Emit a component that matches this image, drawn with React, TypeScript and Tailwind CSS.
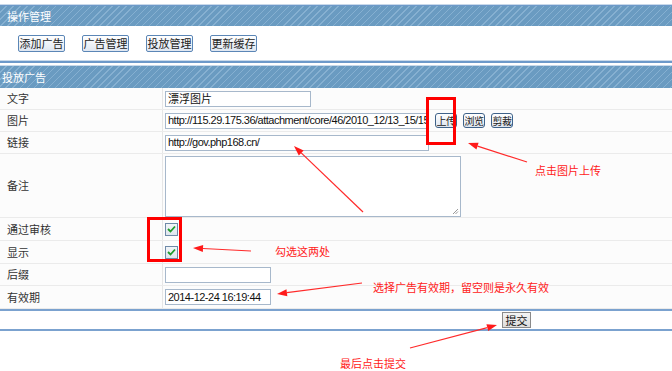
import React from "react";

const band =
  "bg-[repeating-linear-gradient(135deg,#6a9bc1_0px,#6a9bc1_4px,#86b0d1_4px,#86b0d1_5px)]";

function Arrow({ x1, y1, x2, y2 }: { x1: number; y1: number; x2: number; y2: number }) {
  const dx = x2 - x1;
  const dy = y2 - y1;
  const len = Math.sqrt(dx * dx + dy * dy);
  const ux = dx / len;
  const uy = dy / len;
  const L = 10;
  const W = 3.5;
  const bx = x2 - ux * L;
  const by = y2 - uy * L;
  const pts = `${x2},${y2} ${bx - uy * W},${by + ux * W} ${bx + uy * W},${by - ux * W}`;
  return (
    <g>
      <line x1={x1} y1={y1} x2={bx} y2={by} stroke="#ff2a2a" strokeWidth={1.2} />
      <polygon points={pts} fill="#ff1a1a" />
    </g>
  );
}

function Btn({ children }: { children: React.ReactNode }) {
  return (
    <div className="w-[47px] h-[17px] border border-[#5b86b6] rounded-[2px] bg-[linear-gradient(#ffffff,#dfe7f1)] flex items-center justify-center text-[11px] text-[#222] leading-none whitespace-nowrap">
      {children}
    </div>
  );
}

function SmallBtn({ children }: { children: React.ReactNode }) {
  return (
    <div className="w-[22px] h-[15px] border border-[#3f6289] rounded-[3px] bg-[linear-gradient(#ffffff,#dde5ef)] flex items-center justify-center text-[10px] tracking-[-0.5px] text-[#222] leading-none whitespace-nowrap overflow-hidden">
      {children}
    </div>
  );
}

function Check() {
  return (
    <div className="w-[13px] h-[13px] border border-[#6f8aa8] bg-[linear-gradient(#f2f5f8,#dfe6ee)] flex items-center justify-center">
      <svg width="9" height="8" viewBox="0 0 9 8">
        <path d="M1 4 L3.5 6.5 L8 1.5" fill="none" stroke="#1f9b2a" strokeWidth="1.8" />
      </svg>
    </div>
  );
}

function Row({
  label,
  h,
  children,
  top,
}: {
  label: string;
  h: string;
  children?: React.ReactNode;
  top?: boolean;
}) {
  return (
    <div className={`flex ${h} border-b border-[#ebebeb] bg-[#fcfcfc]`}>
      <div className="w-[163px] border-r border-[#e6e6e6] pl-[7px] flex items-center text-[11px] text-[#333]">
        {label}
      </div>
      <div className={`flex-1 pl-[2px] flex ${top ? "items-start pt-[2px]" : "items-center"} gap-[6px]`}>
        {children}
      </div>
    </div>
  );
}

const inputCls =
  "h-[16px] border border-[#a7b8cb] bg-white flex items-center pl-[2px] overflow-hidden whitespace-nowrap text-[#111]";
const latin = "font-['Liberation_Sans',sans-serif] text-[11px] tracking-[-0.5px]";

export default function App() {
  return (
    <div className="relative w-[672px] h-[371px] overflow-hidden bg-white font-['Noto_Sans_CJK_SC','Noto_Sans',sans-serif]">
      <div className="h-[4px]" />
      <div className="border-t border-[#c8d9ea]" />
      <div className={`h-[21px] border-t border-[#6d99c9] ${band} flex items-center pl-[7px] text-[11px] text-white`}>
        操作管理
      </div>
      <div className="h-[34px] flex items-center gap-[17px] pl-[18px]">
        <Btn>添加广告</Btn>
        <Btn>广告管理</Btn>
        <Btn>投放管理</Btn>
        <Btn>更新缓存</Btn>
      </div>
      <div className="border-t border-[#c8d9ea]" />
      <div className="border-t-2 border-[#6d99c9]" />
      <div className="h-[2px]" />
      <div className="border-t border-[#c8d9ea]" />
      <div className={`h-[22px] ${band} flex items-center pl-[2px] text-[11px] text-white`}>投放广告</div>

      <Row label="文字" h="h-[22px]">
        <div className={`${inputCls} w-[146px] text-[11px]`}>漂浮图片</div>
      </Row>
      <Row label="图片" h="h-[22px]">
        <div className={`${inputCls} w-[264px] ${latin}`}>
          http://115.29.175.36/attachment/core/46/2010_12/13_15/15
        </div>
        <SmallBtn>上传</SmallBtn>
        <SmallBtn>浏览</SmallBtn>
        <SmallBtn>剪裁</SmallBtn>
      </Row>
      <Row label="链接" h="h-[22px]">
        <div className={`${inputCls} w-[264px] ${latin}`}>http://gov.php168.cn/</div>
      </Row>
      <Row label="备注" h="h-[64px]" top>
        <div className="relative w-[296px] h-[61px] border border-[#a7b8cb] bg-white">
          <svg className="absolute right-[1px] bottom-[1px]" width="7" height="7" viewBox="0 0 7 7">
            <path d="M6 1 L1 6 M6 3.5 L3.5 6" stroke="#9a9a9a" strokeWidth="1" />
          </svg>
        </div>
      </Row>
      <Row label="通过审核" h="h-[23px]">
        <Check />
      </Row>
      <Row label="显示" h="h-[23px]">
        <Check />
      </Row>
      <Row label="后缀" h="h-[22px]">
        <div className={`${inputCls} w-[106px]`} />
      </Row>
      <Row label="有效期" h="h-[23px]">
        <div className={`${inputCls} w-[106px] ${latin}`}>2014-12-24 16:19:44</div>
      </Row>
      <div className="border-t-2 border-[#7ba2cf]" />
      <div className="h-[18px] flex items-center pl-[502px]">
        <div className="w-[29px] h-[16px] border border-[#8a8a8a] bg-[linear-gradient(#f4f4f4,#dcdcdc)] flex items-center justify-center text-[11px] text-[#111] leading-none">
          提交
        </div>
      </div>
      <div className="border-t-2 border-[#7ba2cf]" />

      {/* annotations */}
      <div className="absolute left-[426px] top-[97px] w-[30px] h-[48px] border-[3px] border-[#ff0000]" />
      <div className="absolute left-[147px] top-[217px] w-[35px] h-[45px] border-[3px] border-[#ff0000]" />
      <svg className="absolute left-0 top-0" width="672" height="371" viewBox="0 0 672 371">
        <Arrow x1={527} y1={162} x2={468} y2={143} />
        <Arrow x1={363} y1={212} x2={294} y2={146} />
        <Arrow x1={251} y1={251} x2={193} y2={248} />
        <Arrow x1={362} y1={283} x2={277} y2={294} />
        <Arrow x1={410} y1={348} x2={497} y2={325} />
      </svg>
      <div className="absolute left-[535px] top-[163px] text-[11px] leading-[14px] text-[#ff2020] whitespace-nowrap">
        点击图片上传
      </div>
      <div className="absolute left-[275px] top-[244px] text-[11px] leading-[14px] text-[#ff2020] whitespace-nowrap">
        勾选这两处
      </div>
      <div className="absolute left-[373px] top-[280px] text-[11px] leading-[14px] text-[#ff2020] whitespace-nowrap">
        选择广告有效期，留空则是永久有效
      </div>
      <div className="absolute left-[340px] top-[357px] text-[11px] leading-[13px] text-[#ff2020] whitespace-nowrap">
        最后点击提交
      </div>
    </div>
  );
}
